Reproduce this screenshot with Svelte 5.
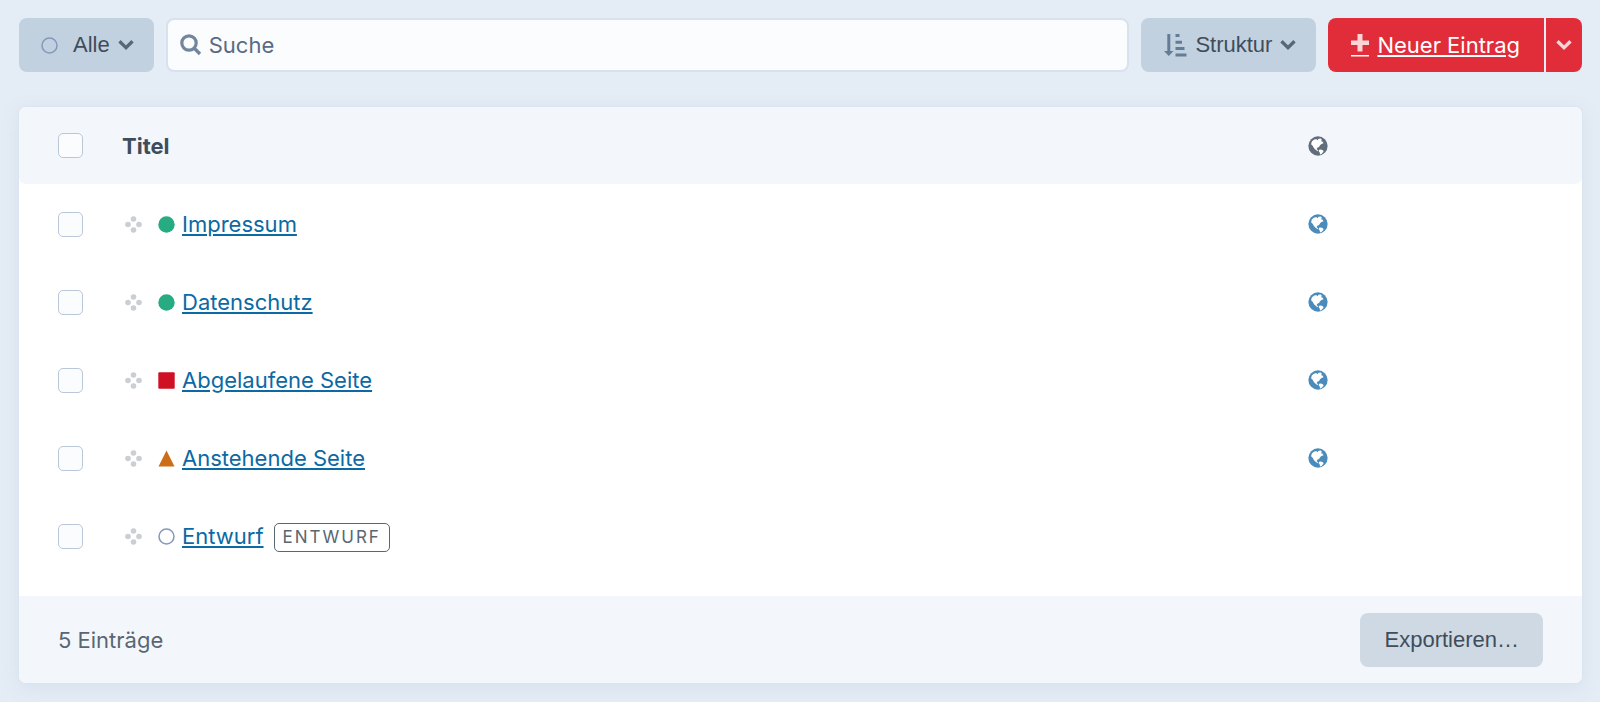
<script>
  let search = $state('')

  const entries = [
    { title: 'Impressum', status: 'live', hasUrl: true },
    { title: 'Datenschutz', status: 'live', hasUrl: true },
    { title: 'Abgelaufene Seite', status: 'expired', hasUrl: true },
    { title: 'Anstehende Seite', status: 'pending', hasUrl: true },
    { title: 'Entwurf', status: 'draft', hasUrl: false, badge: 'Entwurf' }
  ]

  let selected = $state(entries.map(() => false))

  const toggleAll = (event) => {
    selected = entries.map(() => event.target.checked)
  }
</script>

{#snippet chevron()}
  <svg class="chevron" width="16" height="12" viewBox="0 0 16 12" aria-hidden="true">
    <path d="M1.5 2.3 8 8.7l6.500-6.400" fill="none" stroke="currentColor" stroke-width="3.300" />
  </svg>
{/snippet}

{#snippet globe()}
  <svg class="globe" width="20" height="20" viewBox="0 0 58 58" aria-hidden="true">
    <circle cx="29" cy="29" r="28" fill="currentColor" />
    <path class="land" d="M11 16 17 11l7-2 3 3 4-4 6-1 3 4-2 4 4 1 3 5-6 2-4 4-3 5-5 2-2 4 4 3-1 3-6-4-5-5-3-6-5-5z" />
    <path class="land" d="M32 40l6-1 6 3 1 4-6 6-4 2-1-6-3-4z" />
  </svg>
{/snippet}

{#snippet status(type)}
  <svg class="status" width="17" height="17" viewBox="0 0 17 17" aria-hidden="true">
    {#if type === 'live'}
      <circle cx="8.500" cy="8.500" r="8.200" fill="#27ab83" />
    {:else if type === 'expired'}
      <rect x="0.300" y="0.300" width="16.400" height="16.400" rx="1" fill="#cf1124" />
    {:else if type === 'pending'}
      <path d="M8.500 0.500 16.500 16.500H0.500z" fill="#cb6e17" />
    {:else}
      <circle cx="8.500" cy="8.500" r="7.500" fill="none" stroke="#829ab8" stroke-width="1.500" />
    {/if}
  </svg>
{/snippet}

<main>
  <div class="toolbar">
    <button class="btn filter">
      {@render status('all')}
      <span>Alle</span>
      {@render chevron()}
    </button>

    <label class="search">
      <svg width="22" height="22" viewBox="0 0 22 22" aria-hidden="true">
        <circle cx="9" cy="9" r="7.200" fill="none" stroke="currentColor" stroke-width="3.200" />
        <path d="M14 14l6 6" stroke="currentColor" stroke-width="3.400" />
      </svg>
      <input type="text" placeholder="Suche" aria-label="Suche" bind:value={search} />
    </label>

    <button class="btn sort">
      <svg width="23" height="24" viewBox="0 0 23 24" aria-hidden="true">
        <path d="M3.300 1h3v17H9.500L4.800 23 0 18h3.300zM11.500 1h4v3h-4zM11.500 7.700H18v3h-6.500zM11.500 14h9v3h-9zM11.500 20.500h11v3h-11z" fill="currentColor" />
      </svg>
      <span>Struktur</span>
      {@render chevron()}
    </button>

    <div class="new-entry">
      <a class="submit" href="#new">
        <svg width="18" height="24" viewBox="0 0 18 24" aria-hidden="true">
          <path d="M6.500 1h5v6.500H18v4.500h-6.500v6.500h-5V12H0V7.500h6.500z" fill="#fff" opacity="0.800" />
          <path d="M0 22h18v1.500H0z" fill="#fff" />
        </svg>
        <span>Neuer Eintrag</span>
      </a>
      <button class="submit menu" aria-label="Weitere Eintragstypen">
        {@render chevron()}
      </button>
    </div>
  </div>

  <section class="pane">
    <table>
      <thead>
        <tr>
          <th class="check"><input type="checkbox" aria-label="Alle auswählen" onchange={toggleAll} /></th>
          <th>Titel</th>
          <th class="link">{@render globe()}</th>
        </tr>
      </thead>
      <tbody>
        {#each entries as entry, i (entry.title)}
          <tr>
            <td class="check"><input type="checkbox" aria-label={entry.title} bind:checked={selected[i]} /></td>
            <td>
              <div class="element">
                <svg class="move" width="17" height="17" viewBox="0 0 17 17" fill="#cacfd5" aria-hidden="true">
                  <circle cx="8.500" cy="3" r="2.800" />
                  <circle cx="3" cy="8.500" r="2.800" />
                  <circle cx="14" cy="8.500" r="2.800" />
                  <circle cx="8.500" cy="14" r="2.800" />
                </svg>
                {@render status(entry.status)}
                <a href="#{entry.title}">{entry.title}</a>
                {#if entry.badge}
                  <span class="badge">{entry.badge}</span>
                {/if}
              </div>
            </td>
            <td class="link">
              {#if entry.hasUrl}
                <a href="#view" aria-label="Webseite besuchen">{@render globe()}</a>
              {/if}
            </td>
          </tr>
        {/each}
      </tbody>
    </table>

    <footer>
      <span>{entries.length} Einträge</span>
      <button class="btn export">Exportieren…</button>
    </footer>
  </section>
</main>

<style>
  :global(body) {
    background-color: #e4ecf5;
  }

  main {
    padding: 18px 18px 19px 19px;
    font-family: Inter, sans-serif;
    font-size: 22px;
    line-height: 30px;
    color: #3f4d5a;
  }

  svg {
    display: block;
    flex: none;
  }

  .toolbar {
    display: flex;
    gap: 12px;
    height: 54px;
    margin-bottom: 35px;
  }

  .btn {
    display: flex;
    align-items: center;
    box-sizing: border-box;
    height: 54px;
    padding: 0 22px;
    border: 0;
    border-radius: 8px;
    background-color: #c2d1e0;
    color: #3f4d5a;
    font-family: "Liberation Sans", Arial, sans-serif;
    font-size: 22px;
    white-space: nowrap;
  }

  .chevron {
    margin-left: 8px;
    color: #596673;
  }

  .filter {
    padding: 0 20px 0 22px;
  }

  .filter .status {
    margin-right: 15px;
  }

  .search {
    display: flex;
    flex: 1;
    align-items: center;
    box-sizing: border-box;
    gap: 7px;
    padding: 0 12px;
    border: 2px solid #d8e2ec;
    border-radius: 8px;
    background-color: #fbfcfe;
    color: #71869d;
  }

  .search input {
    flex: 1;
    min-width: 0;
    padding: 0;
    border: 0;
    outline: 0;
    background: none;
    color: #3f4d5a;
    font: inherit;
  }

  .search input::placeholder {
    color: #566b84;
    opacity: 1;
  }

  .sort {
    padding: 0 20px 0 23px;
  }

  .sort > svg:first-child {
    margin-right: 8px;
    color: #647d97;
  }

  .new-entry {
    display: flex;
    gap: 2px;
  }

  .submit {
    display: flex;
    align-items: center;
    gap: 8px;
    padding: 0 24px 0 23px;
    border: 0;
    border-radius: 8px 0 0 8px;
    background-color: #e12d39;
    color: #fff;
    text-decoration: none;
    white-space: nowrap;
  }

  .submit span {
    text-decoration: underline;
  }

  .submit.menu {
    padding: 0 10px;
    border-radius: 0 8px 8px 0;
  }

  .menu .chevron {
    margin: 0;
    color: #f9d5d7;
  }

  .pane {
    border-radius: 7px;
    background-color: #fff;
    box-shadow: 0 0 0 1px #dbe5ef, 0 4px 18px #d5e0ec;
  }

  table {
    width: 100%;
    border-collapse: separate;
    border-spacing: 0;
  }

  th,
  td {
    height: 78px;
    padding: 0;
    text-align: left;
    vertical-align: middle;
  }

  th {
    height: 77px;
    border-bottom: 1px solid #fff;
    background-color: #f3f7fc;
    font-weight: 700;
  }

  th:first-child {
    border-radius: 7px 0 0 7px;
  }

  th:last-child {
    border-radius: 0 7px 7px 0;
  }

  .check {
    width: 64px;
    padding-left: 39px;
  }

  .link {
    width: 274px;
  }

  .globe {
    color: #606d7b;
  }

  td .globe {
    color: #4b8bbb;
  }

  .land {
    fill: #fff;
  }

  input[type='checkbox'] {
    display: block;
    appearance: none;
    box-sizing: border-box;
    width: 25px;
    height: 25px;
    margin: 0;
    border: 1px solid #bac7d8;
    border-radius: 5px;
    background-color: #fbfcfe;
  }

  input[type='checkbox']:checked {
    background-color: #606d7b;
  }

  .element {
    display: flex;
    align-items: center;
    padding-left: 3px;
  }

  .element .status {
    margin: 0 7px 0 16px;
  }

  .element a {
    color: #0b69a3;
    text-underline-offset: 2px;
  }

  .badge {
    margin: 2px 0 0 10px;
    padding: 0 8px;
    border: 1px solid #596673;
    border-radius: 5px;
    color: #596673;
    font-size: 17px;
    line-height: 27px;
    letter-spacing: 2px;
    text-transform: uppercase;
  }

  footer {
    display: flex;
    align-items: center;
    justify-content: space-between;
    height: 87px;
    margin-top: 21px;
    padding: 0 39px;
    border-radius: 0 0 7px 7px;
    background-color: #f3f7fc;
    color: #596673;
  }

  .export {
    padding: 0 24px;
    background-color: #cfd9e4;
  }
</style>
